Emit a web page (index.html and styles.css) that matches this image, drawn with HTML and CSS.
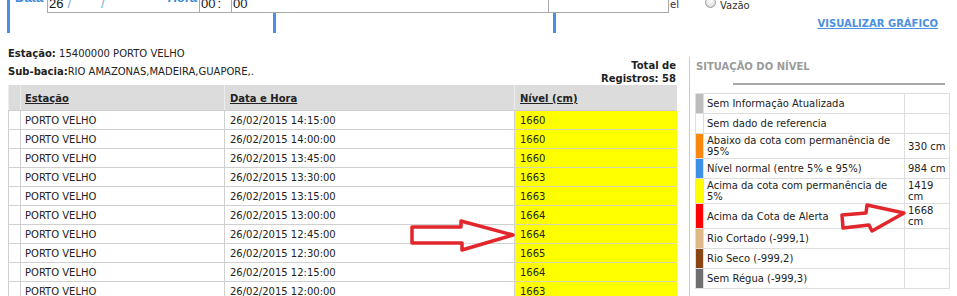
FILE: index.html
```html
<!DOCTYPE html>
<html lang="pt-BR">
<head>
<meta charset="utf-8">
<title>Nível</title>
<link rel="stylesheet" href="styles.css">
</head>
<body>
<div class="page">
  <header class="filters">
    <div class="bar"></div>
    <div class="filters-main">
      <div class="inputs">
        <span class="label lbl-data">Data</span>
        <div class="field f-date"><span class="val">26</span><span class="sep s1">/</span><span class="sep s2">/</span><span class="label lbl-hora">Hora</span></div>
        <div class="field f-h"><span class="val">00 </span><span class="colon">:</span></div>
        <div class="field f-m"><span class="val">00</span></div>
        <div class="field f-x"></div>
        <span class="cut">el</span>
        <span class="radio"></span>
        <span class="radio-lbl">Vazão</span>
      </div>
      <div class="links">
        <div class="bar b2"></div>
        <div class="bar b3"></div>
        <a class="graph-link" href="#">VISUALIZAR GRÁFICO</a>
      </div>
    </div>
  </header>

  <main class="content">
    <section class="results">
      <div class="res-head">
        <div class="info">
          <div><b>Estação:</b> 15400000 PORTO VELHO</div>
          <div><b>Sub-bacia:</b>RIO AMAZONAS,MADEIRA,GUAPORE,.</div>
        </div>
        <div class="total">Total de<br>Registros: 58</div>
      </div>
      <table class="grid">
        <colgroup><col class="c0"><col class="c1"><col class="c2"><col class="c3"></colgroup>
        <thead>
          <tr><th></th><th><u>Estação</u></th><th><u>Data e Hora</u></th><th><u>Nível (cm)</u></th></tr>
        </thead>
        <tbody>
          <tr><td></td><td>PORTO VELHO</td><td>26/02/2015 14:15:00</td><td class="lvl">1660</td></tr>
          <tr><td></td><td>PORTO VELHO</td><td>26/02/2015 14:00:00</td><td class="lvl">1660</td></tr>
          <tr><td></td><td>PORTO VELHO</td><td>26/02/2015 13:45:00</td><td class="lvl">1660</td></tr>
          <tr><td></td><td>PORTO VELHO</td><td>26/02/2015 13:30:00</td><td class="lvl">1663</td></tr>
          <tr><td></td><td>PORTO VELHO</td><td>26/02/2015 13:15:00</td><td class="lvl">1663</td></tr>
          <tr><td></td><td>PORTO VELHO</td><td>26/02/2015 13:00:00</td><td class="lvl">1664</td></tr>
          <tr><td></td><td>PORTO VELHO</td><td>26/02/2015 12:45:00</td><td class="lvl">1664</td></tr>
          <tr><td></td><td>PORTO VELHO</td><td>26/02/2015 12:30:00</td><td class="lvl">1665</td></tr>
          <tr><td></td><td>PORTO VELHO</td><td>26/02/2015 12:15:00</td><td class="lvl">1664</td></tr>
          <tr><td></td><td>PORTO VELHO</td><td>26/02/2015 12:00:00</td><td class="lvl">1663</td></tr>
          <tr><td></td><td>PORTO VELHO</td><td>26/02/2015 11:45:00</td><td class="lvl">1663</td></tr>
        </tbody>
      </table>
    </section>

    <aside class="status">
      <h3 class="status-title">SITUAÇÃO DO NÍVEL</h3>
      <div class="rule"></div>
      <table class="legend">
        <colgroup><col class="l0"><col class="l1"><col class="l2"></colgroup>
        <tr><td class="sw sw-grey"></td><td>Sem Informação Atualizada</td><td></td></tr>
        <tr><td class="sw sw-white"></td><td>Sem dado de referencia</td><td></td></tr>
        <tr><td class="sw sw-orange"></td><td>Abaixo da cota com permanência de 95%</td><td>330 cm</td></tr>
        <tr><td class="sw sw-blue"></td><td>Nível normal (entre 5% e 95%)</td><td>984 cm</td></tr>
        <tr><td class="sw sw-yellow"></td><td>Acima da cota com permanência de 5%</td><td>1419 cm</td></tr>
        <tr><td class="sw sw-red"></td><td>Acima da Cota de Alerta</td><td>1668 cm</td></tr>
        <tr><td class="sw sw-tan"></td><td>Rio Cortado (-999,1)</td><td></td></tr>
        <tr><td class="sw sw-brown"></td><td>Rio Seco (-999,2)</td><td></td></tr>
        <tr><td class="sw sw-dark"></td><td>Sem Régua (-999,3)</td><td></td></tr>
      </table>
    </aside>
  </main>

  <svg class="arrows" width="957" height="296" viewBox="0 0 957 296" aria-hidden="true">
    <polygon points="412,227 461,227 461,221 513,235 462,250 462,243 412,243" />
    <polygon points="842,215 866,213 867,205 904,213 872,231 869,225 843,228" />
  </svg>
</div>
</body>
</html>
```

FILE: styles.css
```css
body {
  margin: 0;
  font-family: "DejaVu Sans", Verdana, sans-serif;
  font-size: 10px;
  color: #222;
  background: #fff;
}

.page {
  position: relative;
  width: 957px;
  height: 296px;
  overflow: hidden;
}

/* ---------- top filter strip ---------- */
.filters {
  display: flex;
  height: 33px;
  margin-left: 7px;
}

.bar {
  width: 3px;
  flex: none;
  background: #4a90e2;
}

.filters-main {
  flex: 1;
  display: flex;
  flex-direction: column;
}

.inputs {
  height: 13px;
  display: flex;
  align-items: flex-end;
  font-family: "Liberation Sans", Arial, sans-serif;
  font-size: 13px;
}

.label {
  color: #3a87d8;
  font-weight: bold;
  line-height: 16px;
}

.lbl-data {
  margin-left: 5px;
  margin-bottom: 7px;
  width: 32px;
}

.field {
  height: 24px;
  box-sizing: border-box;
  border: 1px solid #a9a9a9;
  display: flex;
  align-items: flex-end;
  padding: 0 1px;
  line-height: 16px;
  color: #111;
  background: #fff;
}

.f-date { width: 153px; }
.f-h { width: 33px; margin-left: -1px; }
.f-m { width: 318px; margin-left: -1px; }
.f-x { width: 121px; margin-left: -1px; }

.sep { color: #7fa6d2; }
.s1 { margin-left: 4px; }
.s2 { margin-left: 30px; }

.lbl-hora {
  margin-left: auto;
  margin-right: 1px;
  align-self: flex-end;
  margin-bottom: 6px;
}

.colon { margin-left: 2px; }

.cut {
  font-family: "DejaVu Sans", Verdana, sans-serif;
  font-size: 10px;
  line-height: 12px;
  margin-left: 1px;
  margin-bottom: 2px;
  color: #3a2a3a;
}

.radio {
  width: 11px;
  height: 11px;
  box-sizing: border-box;
  border: 1px solid #9a9a9a;
  border-radius: 50%;
  background: radial-gradient(circle at 50% 35%, #fdfdfd 0%, #e4e4e4 60%, #cfcfcf 100%);
  margin-left: 26px;
  margin-bottom: 5px;
}

.radio-lbl {
  font-family: "DejaVu Sans", Verdana, sans-serif;
  font-size: 10px;
  line-height: 12px;
  margin-left: 4px;
  margin-bottom: 1px;
  color: #333;
}

.links {
  flex: 1;
  display: flex;
  align-items: stretch;
}

.b2 { margin-left: 263px; }
.b3 { margin-left: 277px; }

.graph-link {
  margin-left: auto;
  margin-right: 19px;
  align-self: center;
  font-weight: bold;
  font-size: 10px;
  color: #4a90e2;
  text-decoration: underline;
  line-height: 14px;
  margin-top: 1px;
}

/* ---------- main content ---------- */
.content {
  display: flex;
  align-items: flex-start;
  padding-left: 8px;
}

.results {
  width: 668px;
  flex: none;
  margin-top: 12px;
}

.res-head {
  display: flex;
  justify-content: space-between;
  align-items: flex-end;
}

.info {
  line-height: 18px;
  padding-bottom: 4px;
}

.total {
  font-weight: bold;
  text-align: right;
  line-height: 13px;
}

.grid {
  width: 668px;
  border-collapse: collapse;
  table-layout: fixed;
}

.c0 { width: 12px; }
.c1 { width: 204px; }
.c2 { width: 290px; }
.c3 { width: 162px; }

.grid th {
  background: #dcdcdc;
  height: 24px;
  padding: 1px 4px 0;
  text-align: left;
  font-weight: bold;
  border-left: 1px solid #ececec;
  border-bottom: 1px solid #cfcfcf;
  line-height: 13px;
}

.grid td {
  height: 17px;
  padding: 1px 4px 0;
  border: 1px solid #d0d0d0;
  line-height: 13px;
  white-space: nowrap;
}

.grid th:nth-child(3), .grid td:nth-child(3),
.grid th:nth-child(4), .grid td:nth-child(4) {
  padding-left: 5px;
}

.grid td.lvl {
  background: #ffff00;
  border-color: #d8d8b0;
  border-right: none;
}

/* ---------- status legend ---------- */
.status {
  flex: 1;
  margin-left: 13px;
  margin-top: 24px;
  border-left: 1px solid #cccccc;
  height: 260px;
  padding-left: 6px;
}

.status-title {
  margin: 0;
  font-size: 10px;
  line-height: 20px;
  font-weight: bold;
  color: #9b9b9b;
}

.rule {
  height: 2px;
  background: #a8a8a8;
  width: 212px;
  margin-top: 6px;
  margin-left: 37px;
}

.legend {
  margin-top: 8px;
  margin-left: -1px;
  width: 254px;
  border-collapse: collapse;
  table-layout: fixed;
}

.l0 { width: 8px; }
.l1 { width: 201px; }
.l2 { width: 45px; }

.legend td {
  border: 1px solid #dedede;
  height: 17px;
  padding: 1px 3px 1px 3px;
  line-height: 11px;
  vertical-align: middle;
}

.legend td:nth-child(3) {
  padding: 1px 1px 1px 3px;
}

.legend td.sw { padding: 0; }
.sw-grey { background: #bdbdbd; }
.sw-white { background: #ffffff; }
.sw-orange { background: #f7870f; }
.sw-blue { background: #3d8fe8; }
.sw-yellow { background: #ffff00; }
.sw-red { background: #ff0000; }
.sw-tan { background: #deb887; }
.sw-brown { background: #8b4513; }
.sw-dark { background: #707070; }

/* ---------- annotation arrows ---------- */
.arrows {
  position: absolute;
  top: 0;
  left: 0;
  pointer-events: none;
}

.arrows polygon {
  fill: rgba(255, 255, 255, 0.35);
  stroke: #e3262b;
  stroke-width: 3.5;
  stroke-linejoin: round;
}
```
